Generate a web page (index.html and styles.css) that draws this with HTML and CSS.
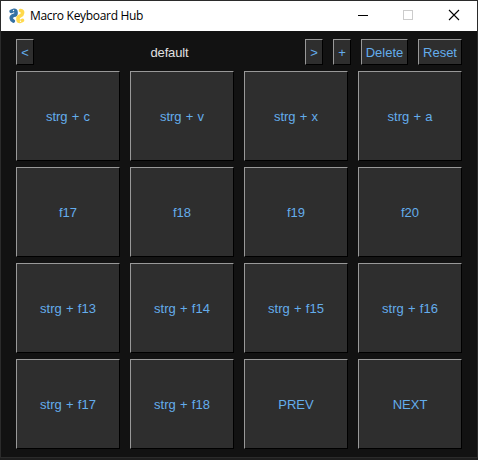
FILE: index.html
```html
<!DOCTYPE html>
<html lang="en">
<head>
<meta charset="utf-8">
<title>Macro Keyboard Hub</title>
<link rel="stylesheet" href="styles.css">
</head>
<body>
<div class="window">
  <header class="titlebar">
    <svg class="logo" width="16" height="16" viewBox="0 0 16 16" fill="none" stroke-width="3.6" stroke-linecap="round" stroke-linejoin="round">
      <path d="M2.200 3.500L4.800 2.300Q7 2 7 4.200V5.500Q7 7 5 7.300Q2.200 8 2.200 10.200Q2.300 11.800 4.300 13" stroke="#3672a4"/>
      <path d="M11.500 2.500Q13.800 3 13.600 5Q13.500 6.800 11.200 7.900Q9 8.500 9 10.500V11.800Q9 13.700 11 13.500L13.500 12.300" stroke="#ffd94c"/>
      <circle cx="4.500" cy="2.500" r=".7" fill="#fff"/>
      <circle cx="11.500" cy="13.300" r=".7" fill="#fff"/>
    </svg>
    <span class="title">Macro Keyboard Hub</span>
    <svg class="controls" width="138" height="30" viewBox="0 0 138 30" fill="none">
      <path d="M19 14.500h10" stroke="#000"/>
      <rect x="64.500" y="9.500" width="9" height="9" stroke="#ccc"/>
      <path d="M110 9l10 10M120 9l-10 10" stroke="#000" stroke-width="1.100"/>
    </svg>
  </header>
  <main class="content">
    <div class="toolbar">
      <button class="btn small">&lt;</button>
      <span class="profile">default</span>
      <button class="btn small">&gt;</button>
      <button class="btn small">+</button>
      <button class="btn delete">Delete</button>
      <button class="btn reset">Reset</button>
    </div>
    <div class="keys">
      <button class="btn">strg + c</button>
      <button class="btn">strg + v</button>
      <button class="btn">strg + x</button>
      <button class="btn">strg + a</button>
      <button class="btn">f17</button>
      <button class="btn">f18</button>
      <button class="btn">f19</button>
      <button class="btn">f20</button>
      <button class="btn">strg + f13</button>
      <button class="btn">strg + f14</button>
      <button class="btn">strg + f15</button>
      <button class="btn">strg + f16</button>
      <button class="btn">strg + f17</button>
      <button class="btn">strg + f18</button>
      <button class="btn">PREV</button>
      <button class="btn">NEXT</button>
    </div>
  </main>
</div>
</body>
</html>
```
FILE: styles.css
```css
* {
  box-sizing: border-box;
}

body {
  margin: 0;
  height: 460px;
  background: #1e1e1e;
  overflow: hidden;
}

.window {
  width: 478px;
  height: 458px;
  border: 1px solid #2b2b2b;
  background: #121212;
}

.titlebar {
  display: flex;
  align-items: center;
  height: 30px;
  padding-left: 8px;
  background: #fff;
}

.logo {
  flex: none;
}

.title {
  flex: 1;
  margin-left: 5px;
  font: 12px/16px "Open Sans", "Noto Sans", sans-serif;
  letter-spacing: -0.31px;
  white-space: nowrap;
  color: #000;
}

.controls {
  flex: none;
}

.content {
  padding: 8px 15px 0;
}

.toolbar {
  display: flex;
  gap: 10px;
  height: 26px;
  margin-bottom: 6px;
}

.btn {
  padding: 2px 0 0;
  border: 1px solid;
  border-color: #999 #000 #000 #999;
  border-radius: 0;
  background: #2e2e2e;
  color: #64adec;
  font: 13px/16px "Liberation Sans", Arial, sans-serif;
  word-spacing: 0.6px;
  white-space: nowrap;
}

.small {
  width: 18px;
}

.delete {
  width: 47px;
}

.reset {
  width: 44px;
}

.profile {
  flex: 1;
  text-align: center;
  font: 13px/27px "Liberation Sans", Arial, sans-serif;
  letter-spacing: -0.15px;
  color: #e0e0e0;
}

.keys {
  display: grid;
  grid-template-columns: repeat(4, 104px);
  grid-auto-rows: 90px;
  gap: 6px 10px;
}
```
